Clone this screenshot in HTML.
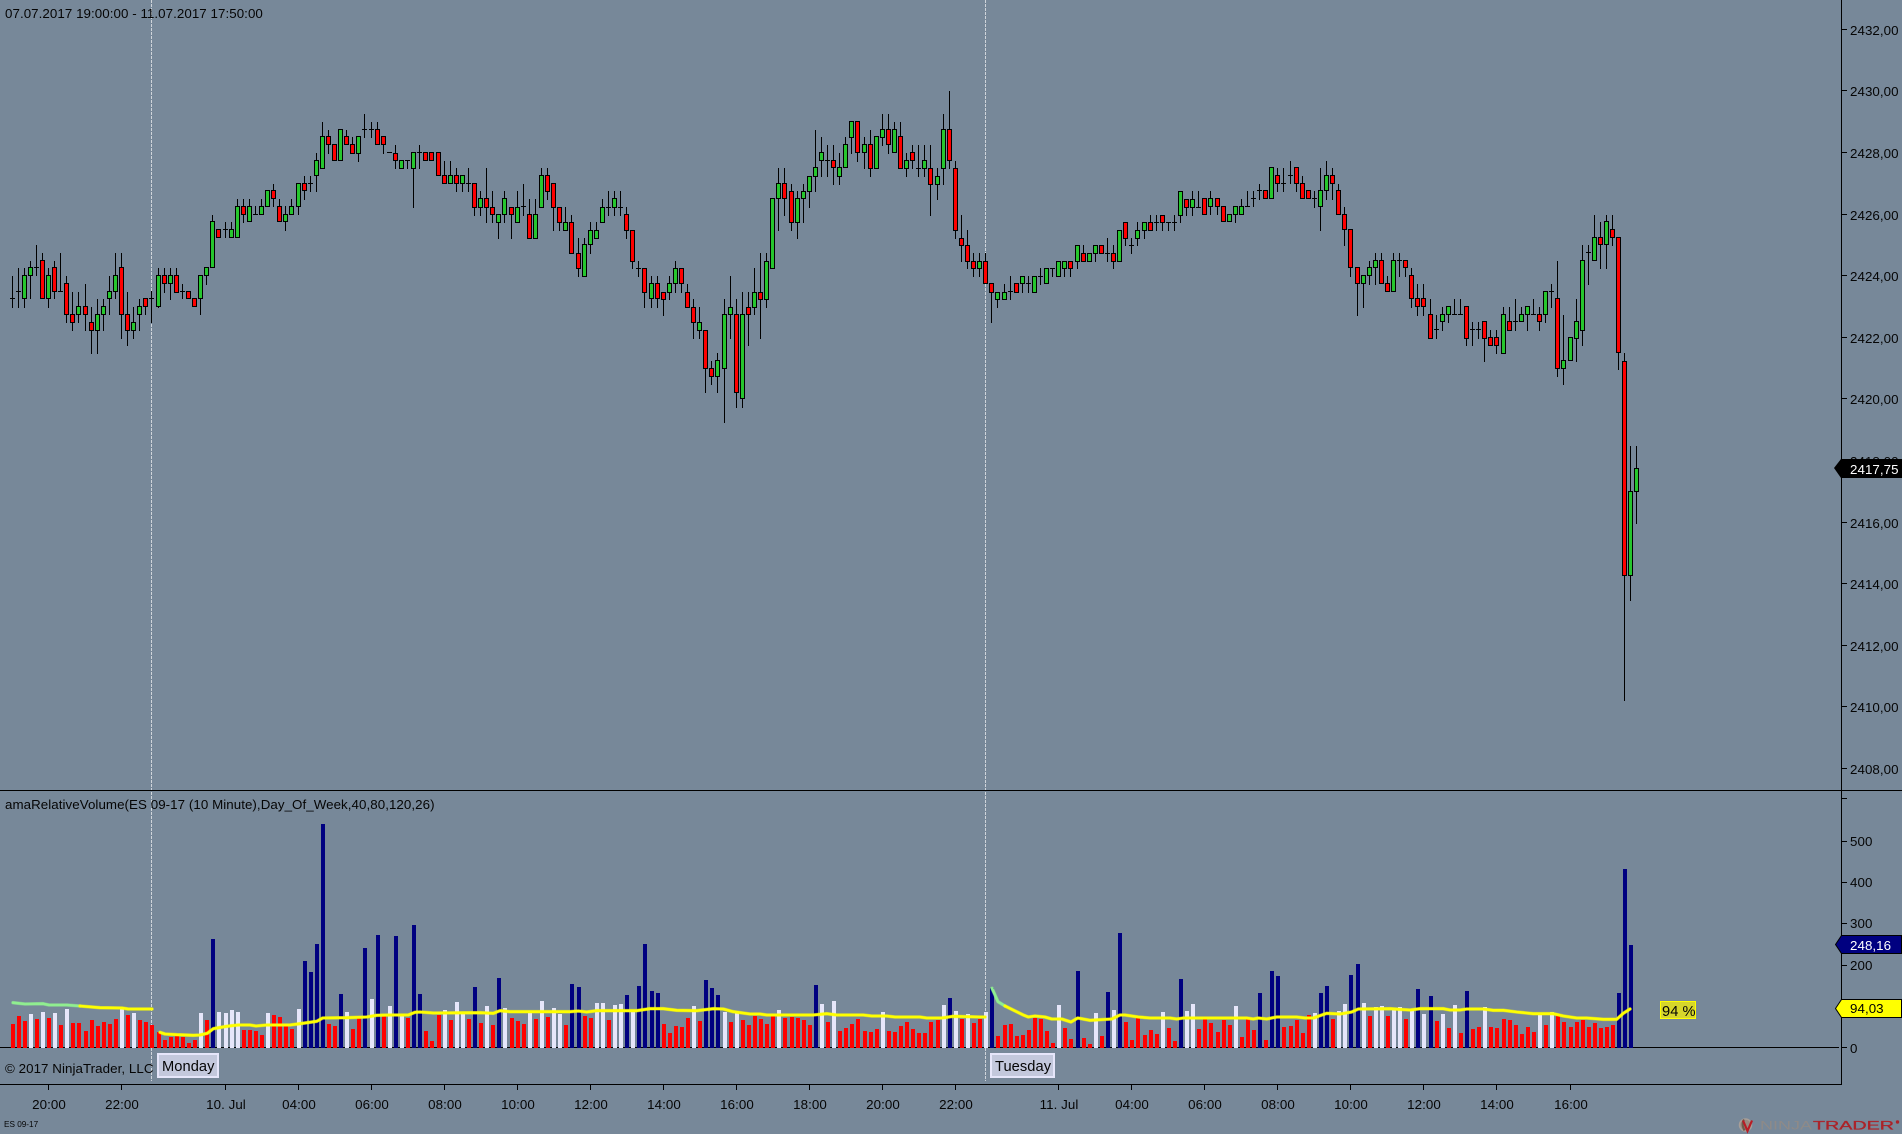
<!DOCTYPE html>
<html>
<head>
<meta charset="utf-8">
<title>Chart</title>
<style>
html,body{margin:0;padding:0;background:#778899;width:1902px;height:1134px;overflow:hidden}
svg{position:absolute;left:0;top:0;display:block}
text{font-family:"Liberation Sans",Arial,sans-serif;font-size:13.33px;fill:#050505;letter-spacing:.06px}
.m{text-anchor:middle}
</style>
</head>
<body>
<svg id="c" width="1902" height="1134" viewBox="0 0 1902 1134" xmlns="http://www.w3.org/2000/svg">
<g shape-rendering="crispEdges">
<line x1="151.5" y1="0" x2="151.5" y2="1081" stroke="#cfd4da" stroke-width="1" stroke-dasharray="3 1"/>
<line x1="985.5" y1="0" x2="985.5" y2="1081" stroke="#cfd4da" stroke-width="1" stroke-dasharray="3 1"/>
<rect x="0" y="790" width="1902" height="1" fill="#000"/>
<rect x="0" y="1084" width="1842" height="1" fill="#000"/>
<rect x="1841" y="0" width="1" height="1085" fill="#000"/>
<rect x="0" y="1047" width="1839" height="1" fill="#000"/>
</g>
<g id="ticks" shape-rendering="crispEdges" fill="#000"></g>
<g id="vol" shape-rendering="crispEdges"></g>
<g id="lines" fill="none" stroke-linejoin="round" stroke-linecap="round"></g>
<g id="cand" shape-rendering="crispEdges"></g>

<text x="5" y="18">07.07.2017 19:00:00 - 11.07.2017 17:50:00</text>
<text x="5" y="809">amaRelativeVolume(ES 09-17 (10 Minute),Day_Of_Week,40,80,120,26)</text>
<text x="5" y="1073">© 2017 NinjaTrader, LLC</text>

<g shape-rendering="crispEdges">
<rect x="158" y="1054" width="60" height="23" fill="#c3c8dc" stroke="#e6e6fa" stroke-width="2"/>
<rect x="991" y="1054" width="63" height="23" fill="#c3c8dc" stroke="#e6e6fa" stroke-width="2"/>
</g>
<text x="162" y="1071" style="font-size:14.67px">Monday</text>
<text x="995" y="1071" style="font-size:14.67px">Tuesday</text>

<text x="1850" y="35">2432,00</text>
<text x="1850" y="96">2430,00</text>
<text x="1850" y="158">2428,00</text>
<text x="1850" y="220">2426,00</text>
<text x="1850" y="281">2424,00</text>
<text x="1850" y="343">2422,00</text>
<text x="1850" y="404">2420,00</text>
<text x="1850" y="466">2418,00</text>
<text x="1850" y="528">2416,00</text>
<text x="1850" y="589">2414,00</text>
<text x="1850" y="651">2412,00</text>
<text x="1850" y="712">2410,00</text>
<text x="1850" y="774">2408,00</text>

<text x="1850" y="846">500</text>
<text x="1850" y="887">400</text>
<text x="1850" y="928">300</text>
<text x="1850" y="970">200</text>
<text x="1850" y="1053">0</text>

<text class="m" x="49" y="1109">20:00</text>
<text class="m" x="122" y="1109">22:00</text>
<text class="m" x="226" y="1109">10. Jul</text>
<text class="m" x="299" y="1109">04:00</text>
<text class="m" x="372" y="1109">06:00</text>
<text class="m" x="445" y="1109">08:00</text>
<text class="m" x="518" y="1109">10:00</text>
<text class="m" x="591" y="1109">12:00</text>
<text class="m" x="664" y="1109">14:00</text>
<text class="m" x="737" y="1109">16:00</text>
<text class="m" x="810" y="1109">18:00</text>
<text class="m" x="883" y="1109">20:00</text>
<text class="m" x="956" y="1109">22:00</text>
<text class="m" x="1059" y="1109">11. Jul</text>
<text class="m" x="1132" y="1109">04:00</text>
<text class="m" x="1205" y="1109">06:00</text>
<text class="m" x="1278" y="1109">08:00</text>
<text class="m" x="1351" y="1109">10:00</text>
<text class="m" x="1424" y="1109">12:00</text>
<text class="m" x="1497" y="1109">14:00</text>
<text class="m" x="1571" y="1109">16:00</text>

<polygon points="1834,468 1841,459 1902,459 1902,478 1841,478" fill="#000"/>
<text x="1850" y="474" style="fill:#fff">2417,75</text>
<polygon points="1835.5,944.5 1841.5,935.5 1901.5,935.5 1901.5,953.5 1841.5,953.5" fill="#000080" stroke="#000"/>
<text x="1850" y="950" style="fill:#fff">248,16</text>
<polygon points="1835.5,1008.5 1841.5,999.5 1901.5,999.5 1901.5,1017.5 1841.5,1017.5" fill="#ffff00" stroke="#000"/>
<text x="1850" y="1013" style="fill:#000">94,03</text>

<rect x="1660.5" y="1001.5" width="35" height="17" fill="#d6d62c" stroke="#ffff00" shape-rendering="crispEdges"/>
<text x="1662" y="1016" style="font-size:14.67px">94 %</text>

<text x="4" y="1127" style="font-size:8.2px;letter-spacing:0">ES 09-17</text>

<circle cx="1745.5" cy="1125" r="6" fill="#9a8a80" stroke="#a89e98" stroke-width="1.5"/>
<path d="M1744 1119.5 Q1741 1124 1744.5 1130.5" fill="none" stroke="#6e5a4c" stroke-width="2"/>
<path d="M1743 1120.5 L1747.5 1131 L1752 1120.5" fill="none" stroke="#b81c24" stroke-width="2.2"/>
<text x="1760" y="1129.5" textLength="52" lengthAdjust="spacingAndGlyphs" style="font-size:11.5px;letter-spacing:0;fill:#8e8a88">NINJA</text>
<text x="1813" y="1129.5" textLength="81" lengthAdjust="spacingAndGlyphs" style="font-size:11.5px;letter-spacing:0;fill:#ab2329;stroke:#ab2329;stroke-width:.3">TRADER</text>
<circle cx="1897.5" cy="1122" r="1.7" fill="#ab2329"/>
</svg>
<script>
var NS='http://www.w3.org/2000/svg';
function R(g,x,y,w,h,f){var r=document.createElementNS(NS,'rect');r.setAttribute('x',x);r.setAttribute('y',y);r.setAttribute('width',w);r.setAttribute('height',h);r.setAttribute('fill',f);g.appendChild(r);}
var GREEN='#26c62e',RED='#ff0000',NAVY='#000080',WHITE='#e6e6fa';

/* candles: x wickTop bodyTop bodyBot wickBot colour (zoomed coordinates) */
var C=[
[0,0,"37 828 895 895 920 d;55 805 873 873 920 d;73 805 826 895 920 g;91 784 802 826 895 g;109 736 802 802 826 d;127 760 781 895 895 r;145 805 826 895 920 g;163 784 802 873 895 r;181 760 873 873 873 d;199 828 850 943 965 r;217 877 943 965 990 r;235 877 919 943 965 g;256 853 919 943 990 r;274 920 965 989 1058 r;292 897 943 989 1058 g;310 897 919 943 990 g;328 828 874 895 943 g;346 760 826 874 895 g;364 760 802 943 1013 r;382 877 943 989 1035 r;400 920 965 989 1013 g;418 897 919 943 990 g;436 895 895 919 943 r;454 874 895 895 965 d;475 805 826 919 920 g;493 805 826 850 875 r;511 805 826 850 897 g;529 805 826 875 875 r;547 853 873 873 895 d;565 874 874 895 895 r;583 895 895 919 919 r;601 826 826 895 943 g;619 802 802 826 851 g;637 645 664 802 802 g;655 688 688 712 712 r;676 666 688 688 712 d;694 666 688 712 712 g;712 598 619 712 712 g;730 598 619 643 666 r;748 598 619 664 664 g;766 619 643 643 643 d;784 598 619 643 643 g;802 571 571 619 619 g;820 552 571 595 619 r;838 598 619 664 664 r;856 619 643 664 689 g;874 598 619 643 643 g;895 550 550 619 643 g;913 528 550 571 597 r;931 528 550 550 573 d;949 460 481 526 573 g;967 366 409 503 503 g;985 390 409 433 458 r;1003 433 433 481 481 r;1021 388 388 481 481 g;1039 390 409 433 433 r;1057 411 433 458 458 r;1075 409 409 458 483 g;1093 342 388 388 411 d;1114 366 388 388 411 d;1132 366 388 433 433 r;1150 409 409 433 458 r;1168 457 457 457 457 d;1186 436 458 481 504 r"],
[400,100,"4 181 181 203 203 g;22 181 181 181 203 d;40 157 157 203 320 g;58 136 157 157 203 d;76 157 157 181 181 r;94 157 157 181 181 r;115 157 157 226 226 r;133 184 226 250 250 r;151 184 226 250 250 g;169 205 226 250 272 r;187 226 226 250 272 g;205 205 250 250 272 d;223 250 250 320 344 r;241 274 295 320 344 g;259 205 295 320 365 r;277 274 320 343 365 r;295 343 343 365 413 g;313 274 295 343 365 g;334 320 320 343 413 r;352 274 320 365 365 g;370 252 319 319 344 d;388 297 343 413 413 r;406 297 343 413 413 g;424 205 226 320 320 g;442 205 226 272 297 r;460 250 250 320 390 r;478 320 320 365 390 r;496 320 365 389 389 g;514 345 365 458 458 r;535 415 458 503 527 r;553 415 433 527 527 g;571 366 389 433 458 g;589 366 389 413 413 g;607 297 320 365 365 g;625 274 320 320 344 d;643 274 295 320 344 g;661 274 320 320 344 d;679 321 343 389 413 r;697 389 389 482 503 r;715 484 503 503 527 d;733 503 503 575 620 r;754 528 550 595 620 g;772 528 550 595 620 r;790 575 575 596 644 r;808 528 550 575 597 g;826 484 503 550 575 g;844 503 503 550 575 r;862 552 575 620 620 r;880 597 620 665 713 r;898 622 665 689 713 g;916 689 689 805 875 r;934 783 805 827 851 r;952 760 781 827 875 g;973 598 643 805 965 g;991 528 620 643 713 g;1009 598 643 875 920 r;1027 576 643 895 920 g;1045 576 620 643 735 r;1063 505 575 620 643 g;1081 460 575 596 713 r;1099 460 482 596 620 g;1117 295 295 503 503 g;1135 205 250 295 390 g;1153 205 250 295 344 r;1174 252 272 365 390 r;1192 274 295 365 413 g"],
[800,80,"10 312 332 355 425 g;28 287 287 332 380 g;46 150 262 287 332 g;64 171 217 241 287 g;82 195 241 241 287 d;100 195 241 262 311 r;118 220 262 287 311 g;136 171 193 262 262 g;154 124 124 170 218 g;172 124 124 217 242 r;193 171 193 217 263 g;211 150 193 263 287 r;229 169 169 263 263 g;247 102 148 170 195 g;265 102 148 193 218 r;283 126 148 217 217 g;301 126 169 263 263 r;319 220 241 263 287 g;337 195 217 241 263 r;355 195 263 263 287 d;373 195 241 263 287 g;391 195 263 311 404 r;412 264 287 311 356 g;430 102 148 263 311 g;448 34 148 241 263 r;466 243 263 449 473 r;484 406 473 494 542 r;502 450 494 542 563 r;520 519 542 563 587 r;538 519 542 563 587 g;556 519 542 610 610 r;574 610 610 635 725 r;592 635 635 656 680 g;613 613 635 656 656 g;631 589 634 634 656 d;649 610 610 635 635 r;667 587 587 610 635 g;685 589 610 610 635 d;703 587 587 635 635 g;721 565 587 587 611 d;739 563 563 610 610 g;757 563 563 563 587 d;775 542 542 587 587 g;793 542 542 563 587 g;811 542 542 563 587 r;832 494 494 542 563 g;850 496 518 542 542 r;868 518 518 542 542 g;886 494 494 518 542 g;904 494 494 518 518 r;922 475 518 518 542 d;940 496 518 542 563 r;958 449 449 542 542 g;976 425 425 473 494 r;994 475 494 494 519 d;1012 427 449 473 494 g;1033 425 425 449 473 g;1051 406 425 449 449 r;1069 406 425 425 449 d;1087 404 404 425 449 r;1105 425 425 425 449 d;1123 406 425 425 449 d;1141 332 332 404 425 g;1159 356 356 380 404 r;1177 334 356 380 404 g;1195 334 380 380 380 d"],
[1200,150,"13 145 145 193 193 r;31 124 145 169 193 g;52 145 145 169 193 r;70 169 169 214 214 r;88 193 193 214 214 g;106 169 169 193 216 g;124 148 169 193 193 g;142 124 169 169 169 d;160 124 145 145 169 d;178 102 121 121 146 d;196 121 121 145 145 r;214 52 52 145 145 g;232 55 76 100 123 r;250 55 100 100 123 d;271 34 76 76 100 d;289 52 52 100 123 r;307 79 100 145 145 r;325 121 121 145 145 r;343 123 145 145 170 d;361 55 121 169 239 g;379 34 76 121 146 g;397 55 76 100 146 r;415 102 121 193 193 r;433 171 193 238 285 r;451 238 238 352 377 r;472 352 352 400 494 r;490 376 376 400 470 g;508 333 352 376 401 g;526 309 331 352 401 g;544 309 331 400 400 r;562 378 400 424 424 r;580 309 331 424 424 g;598 309 331 331 377 d;616 331 331 352 377 r;634 355 376 445 470 r;652 403 445 469 494 r;670 403 445 469 494 r;691 448 493 563 563 r;709 496 538 538 563 d;727 472 493 514 539 g;745 469 469 493 516 g;763 448 493 493 493 d;781 448 493 493 493 d;799 469 469 563 585 r;817 517 538 538 585 d;835 517 538 538 563 d;853 514 514 563 632 r;871 541 562 584 584 r;889 541 562 584 608 r;910 472 493 608 608 g;928 472 514 539 539 r;946 448 514 514 539 d;964 472 493 514 514 g;982 469 469 493 539 g;1000 448 493 493 493 d;1018 472 493 514 539 r;1036 424 424 493 516 g;1054 403 424 424 470 d;1072 334 445 655 678 r;1090 496 631 655 702 g;1111 562 562 631 631 g;1129 448 514 563 632 g;1147 286 331 539 585 g;1165 286 307 307 401 d;1183 196 262 331 331 g;1201 217 262 283 353 r;1219 196 214 283 353 g;1237 196 238 262 285 r;1255 262 262 607 656 r"],
[1500,340,"373 40 62 706 1080 r;391 318 454 706 779 g;409 318 385 454 548 g"]
];
var cg=document.getElementById('cand');
C.forEach(function(G){G[2].split(';').forEach(function(s){
 var p=s.split(' ');
 var x=G[0]+Math.floor(+p[0]/3);
 var wt=G[1]+Math.round(+p[1]/3),bt=G[1]+Math.round(+p[2]/3),bb=G[1]+Math.round(+p[3]/3),wb=G[1]+Math.round(+p[4]/3);
 var c=p[5];
 R(cg,x,Math.min(wt,bt),1,Math.max(wb,bb)-Math.min(wt,bt)+1,'#000');
 if(c==='d'){R(cg,x-2,bt,5,1,'#000');}
 else{
  R(cg,x-2,bt,5,bb-bt+1,'#000');
  if(bb-bt>1)R(cg,x-1,bt+1,3,bb-bt-1,c==='g'?GREEN:RED);
 }
});});

/* volume bars: x top colour */
var V=[
[0,"39 732 r;57 708 r;75 723 r;93 702 w;111 717 r;129 696 w;147 714 r;165 699 w;183 735 r;201 687 w;219 729 r;237 729 r;258 753 r;276 720 r;294 738 r;312 726 r;330 732 r;348 717 r;366 687 w;384 705 r;402 699 w;420 720 r;438 726 r;456 735 r;478 756 r;495 780 r;513 771 r;531 768 r;549 771 r;567 789 r;585 780 r;603 699 w;621 720 r;639 477 n;657 696 w;678 699 w;696 690 w;714 696 w;732 750 r;750 750 r;768 753 r;786 765 r;804 699 w;822 705 r;840 711 r;858 732 r;876 747 r;897 687 w;915 543 n;933 576 n;951 492 n;969 132 n;987 732 r;1005 738 r;1023 642 n;1041 696 w;1059 747 r;1077 714 r;1095 504 n;1116 657 w;1134 465 n;1152 708 r;1170 678 w;1188 468 n;1206 705 w;1224 714 r;1242 435 n;1260 642 n;1278 753 r;1296 783 r;1317 705 r;1335 690 w;1353 720 r;1371 666 w;1389 702 w;1407 717 r;1425 621 n"],
[480,"3 729 r;21 678 w;39 735 r;57 594 n;75 684 w;96 714 r;114 723 r;132 732 r;150 699 w;168 717 r;186 663 w;204 711 r;222 684 w;240 702 w;258 735 r;276 612 n;297 621 n;315 708 r;333 714 r;351 669 w;369 669 w;387 720 r;405 675 w;423 672 w;441 645 n;459 696 w;477 618 n;495 492 n;516 633 n;534 639 n;552 732 r;570 759 r;588 738 r;606 741 r;624 714 r;642 678 w;660 723 r;678 600 n;696 624 n;714 645 n;735 696 w;753 726 r;771 699 w;789 720 r;807 735 r;825 708 r;843 717 r;861 732 r;879 708 r;897 690 w;915 714 r;936 711 r;954 714 r;972 720 r;990 735 r;1008 615 n;1026 672 w;1044 726 r;1062 663 w;1080 753 r;1098 744 r;1116 732 r;1134 717 r;1155 753 r;1173 756 r;1191 747 r;1209 696 w;1227 753 r;1245 756 r;1263 738 r;1281 726 r;1299 747 r;1317 759 r;1335 759 r;1353 726 r;1374 720 r;1392 675 w;1410 654 n;1428 693 w;1446 717 r;1464 702 w;1482 729 r"],
[980,"0 717 r;18 696 w;36 624 n;54 768 r;75 735 r;93 732 r;111 768 r;129 765 r;147 750 r;165 714 r;183 717 r;201 753 r;219 789 r;237 675 w;255 744 r;273 777 r;294 573 n;312 774 r;330 792 r;348 699 w;366 768 r;384 636 n;402 690 w;420 459 n;438 726 r;456 780 r;474 714 r;495 765 r;513 750 r;531 762 r;549 696 w;567 744 r;585 783 r;603 597 n;621 693 w;639 672 w;657 747 r;675 717 r;693 729 r;714 756 r;732 720 r;750 735 r;768 678 w;786 771 r;804 717 r;822 750 r;840 639 n;858 780 r;876 573 n;894 588 n;912 741 r;933 738 r;951 720 r;969 759 r;987 705 r;1005 699 w;1023 639 n;1041 618 n;1059 717 r;1077 693 w;1095 672 w;1113 585 n;1134 552 n;1152 669 w;1170 708 r;1188 681 w;1206 678 w;1224 708 r;1242 684 w;1260 681 w;1278 717 r;1296 690 w;1314 627 n;1332 702 w;1353 648 n;1371 723 r;1389 702 w;1407 744 r;1425 675 w"],
[1450,"33 759 r;51 633 n;69 747 r;87 741 r;105 681 w;123 741 r;141 744 r;162 717 r;180 720 r;198 735 r;216 762 r;234 741 r;252 756 r;270 699 w;288 735 r;306 696 w;324 708 r;342 726 r;363 741 r;381 726 r;399 720 r;417 741 r;435 729 r;453 744 r;471 741 r;489 735 r;507 639 n;525 267 n;543 495 n"]
];
var vg=document.getElementById('vol');
var colors={r:RED,w:WHITE,n:NAVY};
V.forEach(function(G){G[1].split(';').forEach(function(s){
 var p=s.split(' ');
 var x=G[0]+Math.round(+p[0]/3)-2,t=780+Math.round(+p[1]/3);
 R(vg,x,t,4,1048-t,colors[p[2]]);
});});

/* indicator lines */
function pts(ox,str){return str.split(' ').map(function(q){var a=q.split(',');return (ox+(+a[0])/3).toFixed(1)+','+(780+(+a[1])/3).toFixed(1);}).join(' ');}
var lg=document.getElementById('lines');
function L(str,col,w,op){var e=document.createElementNS(NS,'polyline');e.setAttribute('points',str);e.setAttribute('stroke',col);e.setAttribute('stroke-width',w);if(op)e.setAttribute('opacity',op);lg.appendChild(e);}
var SEG=[
 {c:'#90ee90',p:pts(0,"39,668 75,672 129,671 147,675 201,675 240,678")},
 {c:'#ffff00',p:pts(0,"240,678 300,683 366,684 384,687 456,687")},
 {c:'#ffff00',p:pts(0,"480,757 495,762 530,764 580,766 600,765 622,760 640,746 680,739 714,735 750,735 768,738 800,735 870,735 900,731 950,724 968,714 1040,713 1100,711 1130,706 1170,705 1225,705 1245,697 1260,696 1300,699 1440,698")+' '+pts(480,"20,699 40,700 60,692 90,695 270,695 295,693 320,696 350,692 470,692 510,686 550,686 590,691 650,692 700,686 730,687 760,695 810,702 840,702 860,705 1000,705 1040,701 1070,705 1150,705 1175,708 1220,708 1245,711 1320,711 1340,714 1385,714 1420,709 1500,711")+' '+pts(980,"15,711")},
 {c:'#90ee90',p:pts(980,"36,625 54,665 75,678")},
 {c:'#ffff00',p:pts(980,"75,678 130,705 145,711 165,708 195,711 215,717 245,717 273,726 293,714 330,721 395,717 420,705 435,705 475,711 510,714 570,714 590,717 610,714 800,714 820,717 835,714 860,717 890,711 950,711 975,714 1000,714 1040,700 1080,702 1115,696 1135,687 1230,686 1290,690 1320,686 1390,686 1410,690 1440,690")+' '+pts(1450,"50,687 100,687 130,691 160,691 200,696 250,701 310,701 340,708 380,714 410,714 460,718 500,718 520,700 540,687")}
];
SEG.forEach(function(s){L(s.p,s.c,3.6,'0.5');L(s.p,s.c,2.6);});

/* axis ticks */
var tg=document.getElementById('ticks');
[29,90,152,214,275,337,398,460,522,583,645,706,768,798,841,882,923,965,1006,1047].forEach(function(y){R(tg,1842,y,5,1,'#000');});
[48,121,225,298,371,444,517,590,663,736,809,882,955,1058,1131,1204,1277,1350,1423,1496,1570].forEach(function(x){R(tg,x,1085,1,5,'#000');});
</script>
</body>
</html>
